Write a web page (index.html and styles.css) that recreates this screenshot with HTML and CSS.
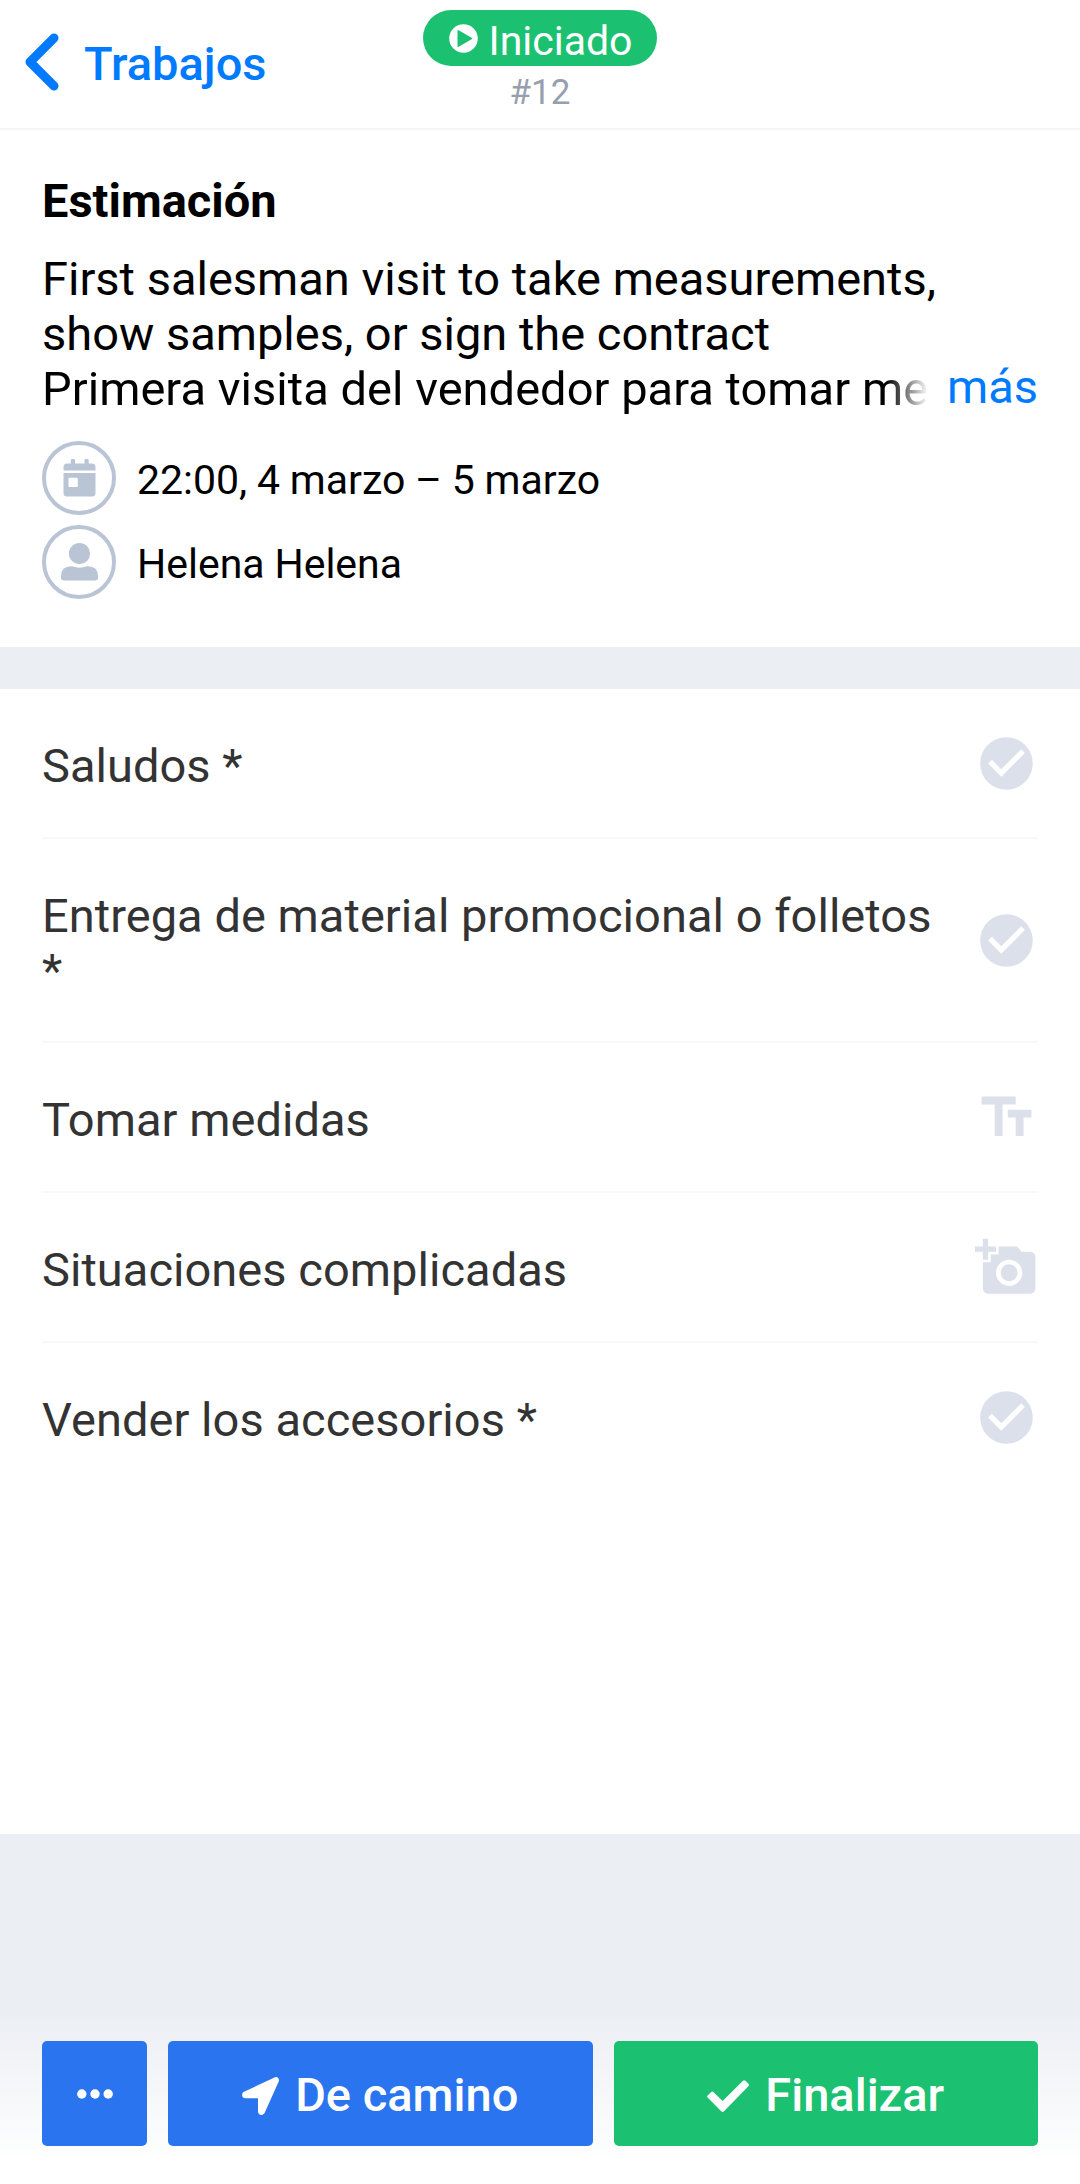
FILE: index.html
```html
<!DOCTYPE html>
<html lang="es">
<head>
<meta charset="utf-8">
<title>Trabajo #12</title>
<link rel="stylesheet" href="styles.css">
</head>
<body>
<div class="screen">
  <header class="topbar">
    <a class="back">
      <svg class="back-icon" viewBox="0 0 34 58"><path d="M29 5 5 29l24 24"/></svg>
      <span class="back-label">Trabajos</span>
    </a>
    <div class="status">
      <div class="badge">
        <svg class="badge-icon" viewBox="0 0 30 30"><path fill-rule="evenodd" d="M15 .2a14.8 14.8 0 1 1 0 29.600a14.800 14.800 0 0 1 0-29.600zM8.800 7v16q0 1.300 1.200.6l13.800-8q1-.6 0-1.200l-13.800-8q-1.200-.7-1.200.6z"/></svg>
        <span class="badge-label">Iniciado</span>
      </div>
      <div class="number">#12</div>
    </div>
    <div></div>
  </header>

  <section class="summary">
    <h1 class="title">Estimación</h1>
    <div class="description">
      <div class="line">First salesman visit to take measurements,</div>
      <div class="line">show samples, or sign the contract</div>
      <div class="last-line">
        <div class="line faded">Primera visita del vendedor para tomar me</div>
        <a class="more">más</a>
      </div>
    </div>
    <div class="meta">
      <span class="ring">
        <svg class="ring-icon" viewBox="0 0 37 38"><path d="M9.800 4.500V1.200q0-1.200 1.200-1.200h1.800Q14 0 14 1.200v3.300h9.500V1.200q0-1.200 1.200-1.200h1.800q1.200 0 1.200 1.200v3.300h3.300q3.500 0 3.500 3.500v3.400h-32V8q0-3.500 3.500-3.500z"/><path fill-rule="evenodd" d="M2.500 14h32v20q0 3.500-3.500 3.500H6Q2.500 37.500 2.500 34zM8.500 18.700q-1 0-1 1v7.300q0 1 1 1h7.300q1 0 1-1v-7.300q0-1-1-1z"/></svg>
      </span>
      <span class="meta-label">22:00, 4 marzo – 5 marzo</span>
    </div>
    <div class="meta">
      <span class="ring">
        <svg class="ring-icon" viewBox="0 0 37 38"><circle cx="18.500" cy="10.600" r="10.600"/><path d="M0 34.500v-1.200q0-10 10-10 2 0 4 .7 4.500 1.400 9 0 2-.7 4-.7 10 0 10 10v1.200q0 3-3 3H3q-3 0-3-3z"/></svg>
      </span>
      <span class="meta-label">Helena Helena</span>
    </div>
  </section>

  <section class="tasks">
    <div class="task">
      <span class="task-label">Saludos *</span>
      <svg class="task-icon" viewBox="0 0 24 24"><path d="M12 2C6.480 2 2 6.480 2 12s4.480 10 10 10 10-4.480 10-10S17.520 2 12 2zm-2 15-5-5 1.410-1.410L10 14.170l7.590-7.590L19 8l-9 9z"/></svg>
    </div>
    <div class="task">
      <span class="task-label">Entrega de material promocional o folletos *</span>
      <svg class="task-icon" viewBox="0 0 24 24"><path d="M12 2C6.480 2 2 6.480 2 12s4.480 10 10 10 10-4.480 10-10S17.520 2 12 2zm-2 15-5-5 1.410-1.410L10 14.170l7.590-7.590L19 8l-9 9z"/></svg>
    </div>
    <div class="task">
      <span class="task-label">Tomar medidas</span>
      <svg class="task-icon" viewBox="0 0 24 24"><path d="M2.500 4v3h5v12h3V7h5V4h-13zm19 5h-9v3h3v7h3v-7h3V9z"/></svg>
    </div>
    <div class="task">
      <span class="task-label">Situaciones complicadas</span>
      <svg class="task-icon" viewBox="0 0 24 24"><path d="M3 4V1h2v3h3v2H5v3H3V6H0V4h3zm3 6V7h3V4h7l1.830 2H21c1.100 0 2 .9 2 2v12c0 1.100-.9 2-2 2H5c-1.100 0-2-.9-2-2V10h3zm7 9c2.760 0 5-2.240 5-5s-2.240-5-5-5-5 2.240-5 5 2.240 5 5 5zm-3.200-5c0 1.770 1.430 3.200 3.200 3.200s3.200-1.430 3.200-3.200-1.430-3.200-3.200-3.200-3.200 1.430-3.200 3.200z"/></svg>
    </div>
    <div class="task">
      <span class="task-label">Vender los accesorios *</span>
      <svg class="task-icon" viewBox="0 0 24 24"><path d="M12 2C6.480 2 2 6.480 2 12s4.480 10 10 10 10-4.480 10-10S17.520 2 12 2zm-2 15-5-5 1.410-1.410L10 14.170l7.590-7.590L19 8l-9 9z"/></svg>
    </div>
  </section>

  <footer class="actions">
    <button class="button more-button" aria-label="Más opciones">
      <svg class="dots" viewBox="0 0 36 10"><circle cx="4.800" cy="5" r="4.700"/><circle cx="18" cy="5" r="4.700"/><circle cx="31.200" cy="5" r="4.700"/></svg>
    </button>
    <button class="button">
      <svg class="arrow" viewBox="0 0 37 38"><path d="M33 .3 2 14.800C-1 16.300-.3 21.200 3.200 21.200H16V34.500C16 38.500 21.300 39 22.700 35.800L36.700 4.600C37.800 2 35.600-.7 33 .3z"/></svg>
      <span class="button-label">De camino</span>
    </button>
    <button class="button finish">
      <svg class="check" viewBox="0 0 42 32"><path d="M14.200 31.200.6 17.600q-1-1 0-2L4 12.200q1.300-1.300 2.600 0l9 8.800L36 .8q1.200-1.200 2.400 0l3 3q1.200 1.200 0 2.400L17 31.200q-1.400 1.400-2.800 0z"/></svg>
      <span class="button-label">Finalizar</span>
    </button>
  </footer>
</div>
</body>
</html>
```
FILE: styles.css
```css
* {
  box-sizing: border-box;
}

body {
  margin: 0;
  background: #ebeef3;
  font-family: Roboto, "Liberation Sans", sans-serif;
  font-size: 47px;
  color: #000;
}

.screen {
  display: flex;
  flex-direction: column;
  height: 2184px;
}

svg {
  display: block;
  flex: none;
  fill: currentColor;
}

.topbar {
  display: grid;
  grid-template-columns: 1fr auto 1fr;
  height: 130px;
  background: #fff;
  border-bottom: 2px solid #f6f6f8;
}

.back {
  display: flex;
  align-items: center;
  gap: 25px;
  height: 124px;
  padding-left: 25px;
  color: #007aff;
  font-weight: 500;
}

.back-icon {
  width: 34px;
  height: 58px;
  fill: none;
  stroke: currentColor;
  stroke-width: 9px;
  stroke-linecap: round;
  stroke-linejoin: round;
}

.back-label {
  padding-top: 2px;
}

.status {
  display: flex;
  flex-direction: column;
  align-items: center;
  padding-top: 10px;
}

.badge {
  display: flex;
  align-items: center;
  justify-content: center;
  gap: 10px;
  width: 234px;
  height: 56px;
  padding-left: 2px;
  border-radius: 28px;
  background: #1bc171;
  color: #fff;
  font-size: 41px;
}

.badge-icon {
  width: 29px;
  height: 29px;
}

.badge-label {
  padding-top: 5px;
}

.number {
  margin-top: 6px;
  font-size: 35px;
  line-height: 42px;
  color: #979fae;
}

.summary {
  height: 517px;
  padding: 43px 42px 0;
  background: #fff;
}

.title {
  margin: 0;
  font-size: 47px;
  line-height: 55px;
  font-weight: 700;
}

.description {
  margin-top: 23px;
}

.line {
  line-height: 55px;
  white-space: nowrap;
}

.last-line {
  display: flex;
  justify-content: space-between;
}

.faded {
  letter-spacing: 0.04px;
  -webkit-mask-image: linear-gradient(to right, #000 845px, transparent 886px);
  mask-image: linear-gradient(to right, #000 845px, transparent 886px);
}

.more {
  line-height: 51px;
  color: #007aff;
}

.meta {
  display: flex;
  align-items: center;
  gap: 21px;
  margin-top: 10px;
  font-size: 41px;
  word-spacing: -0.4px;
}

.description + .meta {
  margin-top: 25px;
}

.ring {
  display: flex;
  align-items: center;
  justify-content: center;
  width: 74px;
  height: 74px;
  border: 4px solid #b9c4d5;
  border-radius: 50%;
  color: #b9c4d5;
}

.ring-icon {
  width: 37px;
  height: 38px;
}

.meta-label {
  padding-top: 4px;
}

.tasks {
  height: 1145px;
  margin-top: 42px;
  padding: 0 42px;
  background: #fff;
}

.task {
  display: flex;
  align-items: center;
  justify-content: space-between;
  min-height: 150px;
  padding: 44.5px 0 43.5px;
  border-bottom: 2px solid #f7f9fa;
  color: #333;
}

.task:last-child {
  border-bottom-color: transparent;
}

.task-label {
  width: 900px;
  padding-top: 4px;
  line-height: 55px;
  letter-spacing: 0.04px;
}

.task-icon {
  width: 63px;
  height: 63px;
  margin: -5px 0;
  color: #dbe0ea;
}

.actions {
  display: flex;
  gap: 21px;
  height: 174px;
  margin-top: auto;
  padding: 31px 42px 0;
  background: linear-gradient(#ebeef3, #fff 155px);
}

.button {
  display: flex;
  flex: 1;
  align-items: center;
  justify-content: center;
  gap: 16px;
  height: 105px;
  padding: 0;
  border: 0;
  border-radius: 5px;
  background: #2a75ef;
  color: #fff;
  font: 500 47px Roboto, "Liberation Sans", sans-serif;
}

.more-button {
  flex: 0 0 105px;
}

.finish {
  background: #1bc171;
}

.button-label {
  padding-top: 2px;
}

.dots {
  width: 36px;
  height: 10px;
}

.arrow {
  width: 37px;
  height: 38px;
  margin-top: 5px;
}

.check {
  width: 42px;
  height: 32px;
  margin-top: 5px;
}
```
